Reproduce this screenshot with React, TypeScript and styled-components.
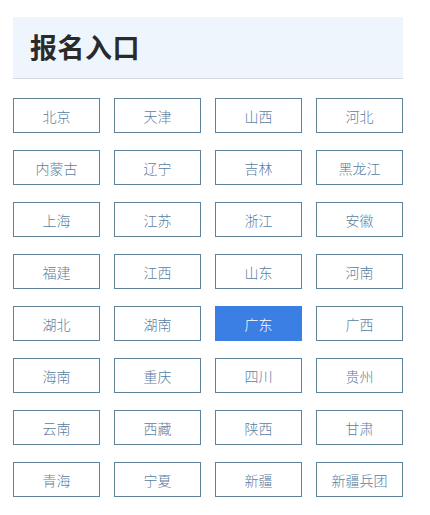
import styled, { createGlobalStyle } from "styled-components";

const provinces = [
  "北京", "天津", "山西", "河北",
  "内蒙古", "辽宁", "吉林", "黑龙江",
  "上海", "江苏", "浙江", "安徽",
  "福建", "江西", "山东", "河南",
  "湖北", "湖南", "广东", "广西",
  "海南", "重庆", "四川", "贵州",
  "云南", "西藏", "陕西", "甘肃",
  "青海", "宁夏", "新疆", "新疆兵团",
];

const active = "广东";

const App = () => {
  return (
    <>
      <GlobalStyle />
      <Page>
        <Header>
          <Title>报名入口</Title>
        </Header>
        <Grid>
          {provinces.map((name) => (
            <Entry key={name} $active={name === active}>
              {name}
            </Entry>
          ))}
        </Grid>
      </Page>
    </>
  );
};

export default App;

const GlobalStyle = createGlobalStyle`
  body {
    margin: 0;
    background: #ffffff;
    font-family: "Noto Sans CJK SC", "Noto Sans", sans-serif;
  }
`;

const Page = styled.div`
  width: 390px;
  padding: 17px 0 0 13px;
`;

const Header = styled.div`
  display: flex;
  align-items: center;
  height: 61px;
  padding-left: 17px;
  background: #eef5fd;
  border-bottom: 1px solid #d6dbe1;
`;

const Title = styled.h1`
  margin: 0 0 2px;
  font-size: 27px;
  font-weight: 700;
  color: #2a2a2a;
  letter-spacing: 0.5px;
`;

const Grid = styled.div`
  display: grid;
  grid-template-columns: repeat(4, 87px);
  column-gap: 14px;
  row-gap: 17px;
  margin-top: 19px;
`;

const Entry = styled.button<{ $active?: boolean }>`
  display: flex;
  align-items: center;
  justify-content: center;
  height: 35px;
  padding: 0;
  box-sizing: border-box;
  border: 1px solid ${({ $active }) => ($active ? "#3b7fe4" : "#5f8199")};
  background: ${({ $active }) => ($active ? "#3b7fe4" : "#ffffff")};
  color: ${({ $active }) => ($active ? "#ffffff" : "#5a7da0")};
  font-family: "Noto Sans CJK SC", "Noto Sans", sans-serif;
  font-size: 14px;
  font-weight: 300;
  cursor: pointer;
`;
